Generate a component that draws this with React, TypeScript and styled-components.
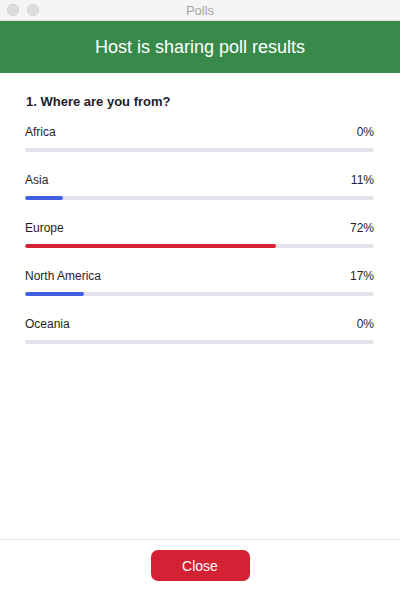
import styled, { createGlobalStyle } from 'styled-components';

type PollOption = {
  label: string;
  percent: number;
};

const options: PollOption[] = [
  { label: 'Africa', percent: 0 },
  { label: 'Asia', percent: 11 },
  { label: 'Europe', percent: 72 },
  { label: 'North America', percent: 17 },
  { label: 'Oceania', percent: 0 },
];

const topPercent = Math.max(...options.map((option) => option.percent));

const GlobalStyle = createGlobalStyle`
  html, body {
    margin: 0;
    padding: 0;
    background: #ffffff;
  }

  body {
    font-family: 'Liberation Sans', Arial, sans-serif;
  }
`;

export default function App() {
  return (
    <>
      <GlobalStyle />
      <Style.Window>
        <Style.TitleBar>
          <Style.Lights>
            <Style.Light />
            <Style.Light />
          </Style.Lights>
          <Style.TitleText>Polls</Style.TitleText>
        </Style.TitleBar>
        <Style.Banner>Host is sharing poll results</Style.Banner>
        <Style.Body>
          <Style.Question>1. Where are you from?</Style.Question>
          <Style.OptionList>
            {options.map((option) => (
              <Style.Option key={option.label}>
                <Style.OptionHeader>
                  <span>{option.label}</span>
                  <span>{option.percent}%</span>
                </Style.OptionHeader>
                <Style.Track>
                  <Style.Fill
                    $top={option.percent === topPercent}
                    style={{ width: `${option.percent}%` }}
                  />
                </Style.Track>
              </Style.Option>
            ))}
          </Style.OptionList>
        </Style.Body>
        <Style.Footer>
          <Style.CloseButton>Close</Style.CloseButton>
        </Style.Footer>
      </Style.Window>
    </>
  );
}

const Style = {
  Window: styled.div`
    width: 400px;
    height: 592px;

    display: flex;
    flex-direction: column;

    background: #ffffff;
  `,
  TitleBar: styled.div`
    height: 21px;

    display: flex;
    align-items: center;
    justify-content: center;
    position: relative;

    background: #f5f5f5;
    border-bottom: 1px solid #dcdcdc;
    box-sizing: border-box;
  `,
  Lights: styled.div`
    display: flex;
    gap: 8px;

    position: absolute;
    left: 7px;
    top: 4px;
  `,
  Light: styled.span`
    width: 12px;
    height: 12px;

    border-radius: 50%;
    background: #dcdcdc;
    box-shadow: inset 0 0 0 0.5px #d0d0d0;
  `,
  TitleText: styled.span`
    margin-top: 1px;

    font-size: 13px;
    color: #a6a6a6;
  `,
  Banner: styled.div`
    height: 52px;

    display: flex;
    align-items: center;
    justify-content: center;

    background: #388a4a;
    color: #ffffff;
    font-size: 18px;
  `,
  Body: styled.div`
    flex: 1;

    padding: 21px 26px 0 25px;
  `,
  Question: styled.h2`
    margin: 0 0 15px 1px;

    font-size: 13px;
    font-weight: bold;
    color: #1d1d2b;
  `,
  OptionList: styled.div`
    display: flex;
    flex-direction: column;
    gap: 20px;
  `,
  Option: styled.div`
    display: flex;
    flex-direction: column;
    gap: 8px;
  `,
  OptionHeader: styled.div`
    display: flex;
    justify-content: space-between;

    font-size: 12px;
    line-height: 16px;
    color: #1f1f24;
  `,
  Track: styled.div`
    height: 4px;

    border-radius: 2px;
    background: #e3e3ea;
    overflow: hidden;
  `,
  Fill: styled.div<{ $top: boolean }>`
    height: 100%;

    border-radius: 2px;
    background: ${({ $top }) => ($top ? '#d42234' : '#3f5fe0')};
  `,
  Footer: styled.div`
    height: 53px;

    display: flex;
    justify-content: center;
    padding-top: 10px;

    border-top: 1px solid #e8e8e8;
    box-sizing: border-box;
  `,
  CloseButton: styled.button`
    all: unset;

    width: 99px;
    height: 31px;

    display: flex;
    align-items: center;
    justify-content: center;

    border-radius: 7px;
    background: #d42234;
    color: #ffffff;
    font-family: 'Liberation Sans', Arial, sans-serif;
    font-size: 14px;
    box-sizing: border-box;
  `,
};
